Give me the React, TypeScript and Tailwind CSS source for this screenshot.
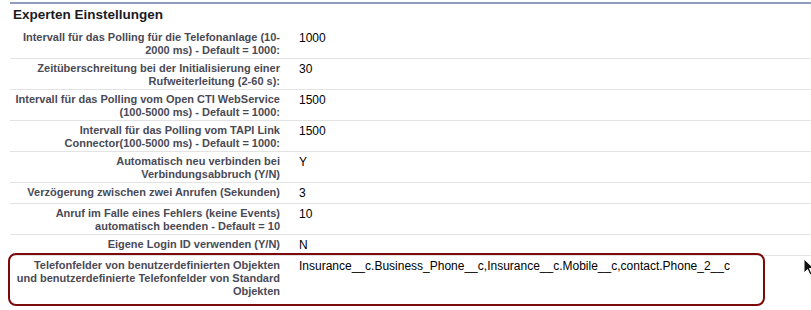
const rows: { label: string[]; value: string }[] = [
  { label: ["Intervall für das Polling für die Telefonanlage (10-", "2000 ms) - Default = 1000:"], value: "1000" },
  { label: ["Zeitüberschreitung bei der Initialisierung einer", "Rufweiterleitung (2-60 s):"], value: "30" },
  { label: ["Intervall für das Polling vom Open CTI WebService", "(100-5000 ms) - Default = 1000:"], value: "1500" },
  { label: ["Intervall für das Polling vom TAPI Link", "Connector(100-5000 ms) - Default = 1000:"], value: "1500" },
  { label: ["Automatisch neu verbinden bei", "Verbindungsabbruch (Y/N)"], value: "Y" },
  { label: ["Verzögerung zwischen zwei Anrufen (Sekunden)"], value: "3" },
  { label: ["Anruf im Falle eines Fehlers (keine Events)", "automatisch beenden - Default = 10"], value: "10" },
  { label: ["Eigene Login ID verwenden (Y/N)"], value: "N" },
  {
    label: ["Telefonfelder von benutzerdefinierten Objekten", "und benutzerdefinierte Telefonfelder von Standard", "Objekten"],
    value: "Insurance__c.Business_Phone__c,Insurance__c.Mobile__c,contact.Phone_2__c",
  },
];

export default function App() {
  return (
    <div className="relative w-[811px] h-[310px] overflow-hidden bg-white font-['Liberation_Sans',Arial,sans-serif]">
      <div className="ml-[10px] mt-[2px] border-t-2 border-[#8e9dbe]">
        <h2 className="pl-[3px] pt-[3px] pb-[5px] text-[13.5px] leading-[16px] font-bold text-[#1b1b1f]">Experten Einstellungen</h2>
        {rows.map((r, i) => (
          <div key={i} className={`flex items-start ${i < rows.length - 1 ? "border-b border-[#e3e3e3]" : ""}`}>
            <div className="w-[280px] shrink-0 pr-[10px] pt-[3px] pb-[1px] text-right text-[11px] leading-[13px] font-bold text-[#4a4a56] whitespace-nowrap">
              {r.label.map((l, j) => (
                <div key={j}>{l}</div>
              ))}
            </div>
            <div className="pl-[9px] py-[3px] text-[12px] leading-[14px] text-black whitespace-nowrap">{r.value}</div>
          </div>
        ))}
      </div>

      {/* highlight annotation */}
      <div className="absolute left-[8px] top-[253px] w-[757px] h-[53px] rounded-[8px] border-2 border-[#7d0a0a]" />

      {/* mouse pointer */}
      <svg className="absolute left-[803px] top-[258px]" width="14" height="20" viewBox="0 0 14 20">
        <path d="M1 1 L1 15 L4.5 11.5 L7 17 L9 16 L6.5 10.5 L11 10.5 Z" fill="#111" stroke="#fff" strokeWidth="1" />
      </svg>
    </div>
  );
}
